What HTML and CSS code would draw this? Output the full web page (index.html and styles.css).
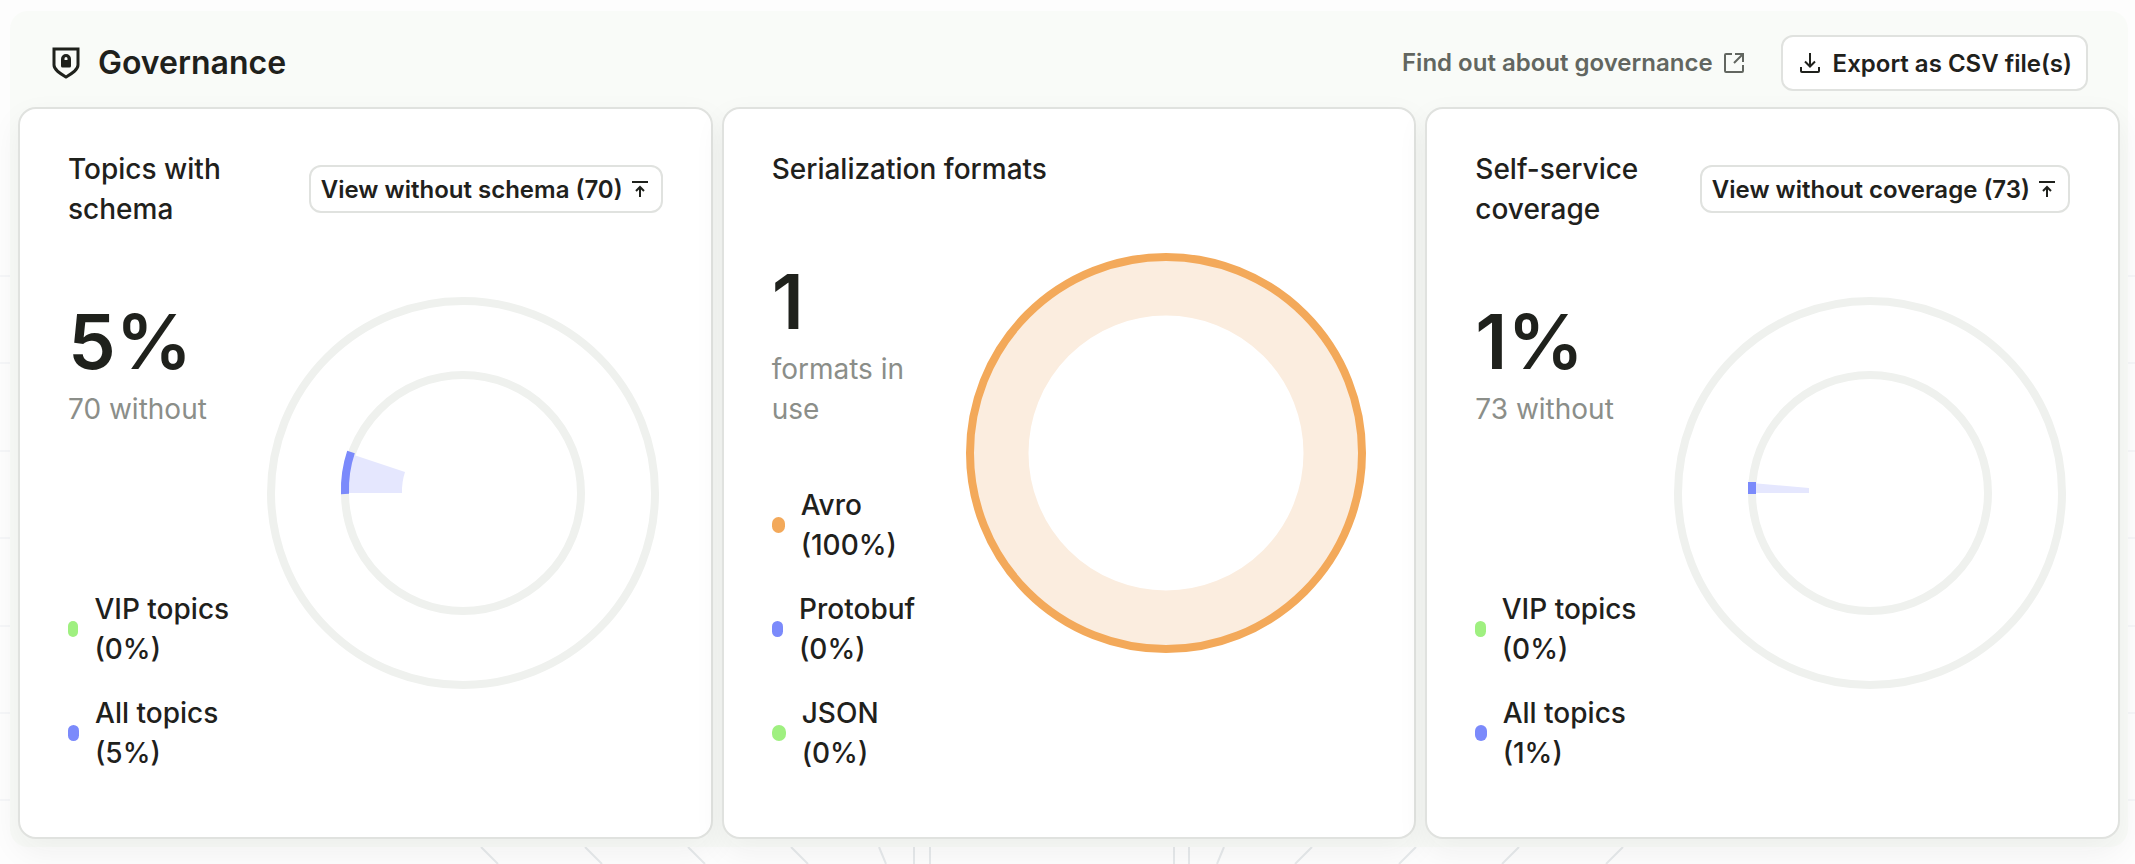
FILE: index.html
```html
<!DOCTYPE html>
<html lang="en">
<head>
    <meta charset="UTF-8">
    <meta name="viewport" content="width=device-width, initial-scale=1.0">
    <title>Governance</title>
    <link rel="stylesheet" href="styles.css">
</head>
<body>
    <svg class="backdrop" viewBox="0 0 2135 864" preserveAspectRatio="none" aria-hidden="true">
        <path class="grid-lines" d="M0 276H2135M0 363H2135M0 451H2135M0 538H2135M0 626H2135M0 713H2135M0 800H2135"/>
        <path class="rays" d="M481 847l17 17M585 847l17 17M688 847l17 17M791 847l17 17M879 847l7 17M914 847v17M930 847v17M1174 847v17M1189 847v17M1224 847l-7 17M1312 847l-17 17M1416 847l-17 17M1519 847l-17 17M1623 847l-17 17"/>
    </svg>

    <section class="panel">
        <header class="panel-header">
            <h1 class="panel-title">
                <svg class="shield" width="28" height="32" viewBox="0 0 28 32" aria-hidden="true">
                    <path d="M2 2H26V18C26 23 19 27 14 30C9 27 2 23 2 18Z" fill="none" stroke="currentColor" stroke-width="3"/>
                    <path fill-rule="evenodd" d="M9 19V12a5 5 0 0 1 10 0V19a1.500 1.500 0 0 1-1.500 1.500H10.500A1.500 1.500 0 0 1 9 19ZM12.500 13h3v-1.500a1.500 1.500 0 0 0-3 0Z" fill="currentColor"/>
                </svg>
                Governance
            </h1>
            <div class="panel-actions">
                <a class="link" href="#">
                    Find out about governance
                    <svg width="22" height="22" viewBox="0 0 22 22" fill="none" stroke="currentColor" stroke-width="2" aria-hidden="true">
                        <path d="M9 2H3a1 1 0 0 0-1 1V19a1 1 0 0 0 1 1H19a1 1 0 0 0 1-1V13M12 2H20V10M20 2L11 11"/>
                    </svg>
                </a>
                <button class="btn btn-large" type="button">
                    <svg width="22" height="22" viewBox="0 0 22 22" fill="none" stroke="currentColor" stroke-width="2" aria-hidden="true">
                        <path d="M11 1V14M6 9.500L11 14.500L16 9.500M2 15V19a1 1 0 0 0 1 1H19a1 1 0 0 0 1-1V15"/>
                    </svg>
                    Export as CSV file(s)
                </button>
            </div>
        </header>

        <div class="cards">
            <article class="card">
                <div class="card-header">
                    <h2 class="card-title">Topics with schema</h2>
                    <button class="btn" type="button">
                        View without schema (70)
                        <svg width="18" height="18" viewBox="0 0 18 18" fill="none" stroke="currentColor" stroke-width="2" aria-hidden="true">
                            <path d="M1 2H17M9 17V8M5 11L9 7L13 11"/>
                        </svg>
                    </button>
                </div>
                <div class="card-body">
                    <div class="details">
                        <div class="stat">
                            <p class="value">5%</p>
                            <p class="caption">70 without</p>
                        </div>
                        <ul class="legend">
                            <li><i class="dot green"></i><span>VIP topics (0%)</span></li>
                            <li><i class="dot blue"></i><span>All topics (5%)</span></li>
                        </ul>
                    </div>
                    <svg class="chart" viewBox="0 0 400 400" role="img" aria-label="5% of topics have a schema">
                        <circle class="track" cx="200" cy="200" r="192"/>
                        <circle class="track" cx="200" cy="200" r="118"/>
                        <path class="slice" d="M82 200H139A61 61 0 0 1 142 179L88 161A118 118 0 0 0 82 200Z"/>
                        <path class="arc" d="M82 201A118 118 0 0 1 88 159"/>
                    </svg>
                </div>
            </article>

            <article class="card">
                <div class="card-header">
                    <h2 class="card-title">Serialization formats</h2>
                </div>
                <div class="card-body">
                    <div class="details">
                        <div class="stat">
                            <p class="value">1</p>
                            <p class="caption">formats in use</p>
                        </div>
                        <ul class="legend">
                            <li><i class="dot orange"></i><span>Avro (100%)</span></li>
                            <li><i class="dot blue"></i><span>Protobuf (0%)</span></li>
                            <li><i class="dot green"></i><span>JSON (0%)</span></li>
                        </ul>
                    </div>
                    <svg class="chart" viewBox="0 0 400 400" role="img" aria-label="All topics use Avro">
                        <circle class="band" cx="200" cy="200" r="166"/>
                        <circle class="ring" cx="200" cy="200" r="196"/>
                    </svg>
                </div>
            </article>

            <article class="card">
                <div class="card-header">
                    <h2 class="card-title">Self-service coverage</h2>
                    <button class="btn" type="button">
                        View without coverage (73)
                        <svg width="18" height="18" viewBox="0 0 18 18" fill="none" stroke="currentColor" stroke-width="2" aria-hidden="true">
                            <path d="M1 2H17M9 17V8M5 11L9 7L13 11"/>
                        </svg>
                    </button>
                </div>
                <div class="card-body">
                    <div class="details">
                        <div class="stat">
                            <p class="value">1%</p>
                            <p class="caption">73 without</p>
                        </div>
                        <ul class="legend">
                            <li><i class="dot green"></i><span>VIP topics (0%)</span></li>
                            <li><i class="dot blue"></i><span>All topics (1%)</span></li>
                        </ul>
                    </div>
                    <svg class="chart" viewBox="0 0 400 400" role="img" aria-label="1% of topics have self-service coverage">
                        <circle class="track" cx="200" cy="200" r="192"/>
                        <circle class="track" cx="200" cy="200" r="118"/>
                        <path class="slice" d="M82 200H139V195L82 190Z"/>
                        <path class="arc" d="M82 201V189"/>
                    </svg>
                </div>
            </article>
        </div>
    </section>
</body>
</html>
```

FILE: styles.css
```css
* {
    margin: 0;
    padding: 0;
    box-sizing: border-box;
}

body {
    min-height: 100vh;
    padding: 11px 7px 17px 10px;
    background-color: #fdfdfd;
    color: #1f211c;
    font-family: Inter, "Liberation Sans", sans-serif;
    font-size: 28px;
    line-height: 40px;
}

/* faint line pattern behind the panel */
.backdrop {
    position: absolute;
    inset: 0;
    width: 100%;
    height: 100%;
    z-index: -1;
    fill: none;
    stroke-width: 2;
}

.grid-lines {
    stroke: #f5f6f8;
}

.rays {
    stroke: #e6e9eb;
}

.panel {
    padding: 24px 8px 8px;
    border-radius: 18px;
    background-color: #f9fbf8;
}

.panel-header {
    display: flex;
    justify-content: space-between;
    align-items: center;
    padding: 0 32px 16px 34px;
}

.panel-title {
    display: flex;
    align-items: center;
    gap: 18px;
    font-size: 32px;
    font-weight: 600;
}

.panel-actions {
    display: flex;
    align-items: center;
    gap: 36px;
}

.link {
    display: flex;
    align-items: center;
    gap: 10px;
    color: #626660;
    font-size: 24px;
    font-weight: 600;
    text-decoration: none;
}

.btn {
    display: flex;
    align-items: center;
    gap: 8px;
    flex-shrink: 0;
    height: 48px;
    padding: 0 12px 0 10px;
    border: 2px solid #e0e2df;
    border-radius: 12px;
    background-color: #fff;
    color: inherit;
    font-family: inherit;
    font-size: 24px;
    font-weight: 600;
    cursor: pointer;
}

.btn-large {
    gap: 12px;
    height: 56px;
    padding: 0 14px 0 16px;
}

.cards {
    display: grid;
    grid-template-columns: repeat(3, 1fr);
    gap: 9px;
}

.card {
    display: flex;
    flex-direction: column;
    gap: 64px;
    padding: 40px 48px 64px;
    border: 2px solid #e0e2df;
    border-radius: 18px;
    background-color: #fff;
    box-shadow: 0 12px 32px rgba(31, 33, 28, 0.06);
}

.card-header {
    display: flex;
    justify-content: space-between;
    align-items: center;
    gap: 32px;
}

.card-title {
    font-size: 28px;
    font-weight: 500;
}

.card-body {
    display: flex;
    flex: 1;
    gap: 32px;
}

.details {
    display: flex;
    flex: 1;
    flex-direction: column;
    justify-content: space-between;
    gap: 56px;
    min-width: 0;
}

.value {
    font-size: 76px;
    font-weight: 600;
    line-height: 96px;
}

.caption {
    color: #8b8e89;
}

.legend {
    display: flex;
    flex-direction: column;
    gap: 24px;
    font-weight: 500;
    list-style: none;
}

.legend li {
    display: flex;
    align-items: center;
    gap: 16px;
}

.dot {
    width: 16px;
    height: 16px;
    border-radius: 8px;
}

.green {
    background-color: #9ff080;
}

.blue {
    background-color: #7b8afb;
}

.orange {
    background-color: #f3a95a;
}

.chart {
    flex: 0 0 400px;
    height: 400px;
    fill: none;
    stroke-width: 8;
}

.track {
    stroke: #eff1ee;
}

.arc {
    stroke: #7b8afb;
}

.slice {
    fill: #e5e7fe;
}

.ring {
    stroke: #f3a95a;
}

.band {
    stroke: #fbeddf;
    stroke-width: 57px;
}
```
